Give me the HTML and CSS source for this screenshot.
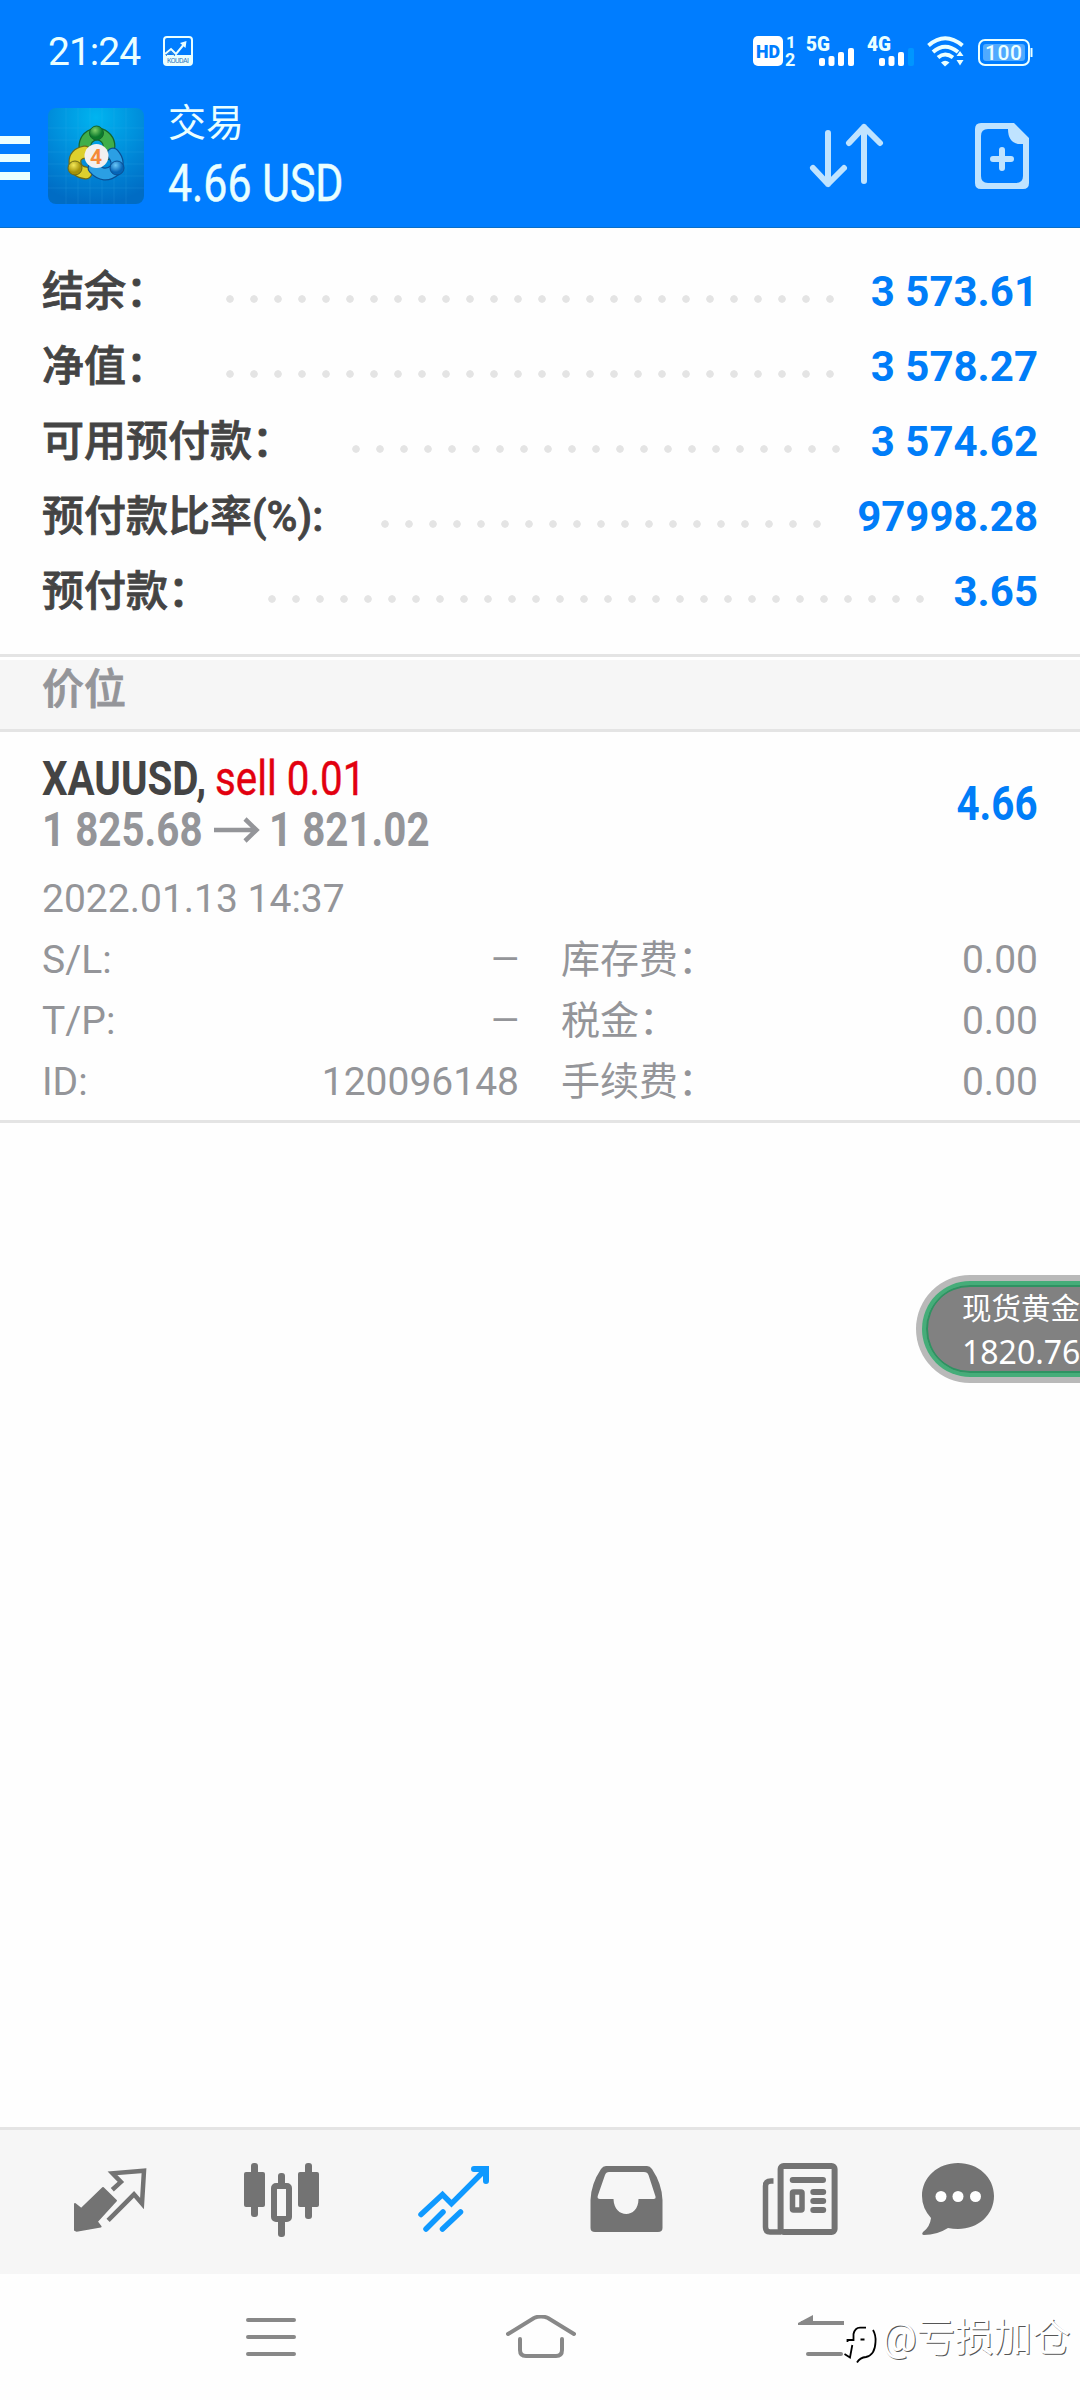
FILE: index.html
```html
<!DOCTYPE html>
<html lang="zh-CN">
<head>
    <meta charset="UTF-8">
    <meta name="viewport" content="width=device-width, initial-scale=1.0">
    <title>交易</title>
    <link rel="stylesheet" href="styles.css">
</head>
<body>
    <header class="header">
        <div class="status-bar">
            <span class="clock">21:24</span>
            <svg class="app-notice" width="30" height="30" viewBox="0 0 30 30">
                <rect x="1" y="1" width="28" height="28" rx="3" fill="none" stroke="#eaffff" stroke-width="2"/>
                <path d="M1 19H29V27Q29 29 27 29H3Q1 29 1 27Z" fill="#eaffff"/>
                <path d="M2 18L8 13L13 18L22 7" fill="none" stroke="#eaffff" stroke-width="2"/>
                <path d="M17 7L23.500 5L22.500 12Z" fill="#eaffff"/>
                <path d="M3 20L7 15.500L12 20" fill="none" stroke="#4a8fd0" stroke-width="1"/>
                <text x="4" y="27" font-size="7" textLength="22" fill="#2a76c0">KOUDAI</text>
            </svg>
            <svg class="signals" width="300" height="36" viewBox="0 0 300 36">
                <rect x="8" y="3" width="30" height="30" rx="5" fill="#fff"/>
                <text x="11" y="25" font-size="19" font-weight="900" textLength="24" lengthAdjust="spacingAndGlyphs" fill="#007dff">HD</text>
                <g fill="#eaffff" font-weight="700">
                    <text x="41" y="15" font-size="17">1</text>
                    <text x="40" y="33" font-size="18" textLength="11">2</text>
                    <text x="61" y="18" font-size="21" font-weight="900" textLength="24" lengthAdjust="spacingAndGlyphs">5G</text>
                    <text x="122" y="18" font-size="21" font-weight="900" textLength="24" lengthAdjust="spacingAndGlyphs">4G</text>
                </g>
                <g fill="#fff">
                    <rect x="74" y="25" width="6" height="8" rx="2"/>
                    <rect x="83.500" y="23" width="6" height="10" rx="2"/>
                    <rect x="93" y="19" width="6" height="14" rx="2"/>
                    <rect x="103" y="15" width="6" height="18" rx="2"/>
                    <rect x="134" y="25" width="6" height="8" rx="2"/>
                    <rect x="143.500" y="23" width="6" height="10" rx="2"/>
                    <rect x="153" y="19" width="6" height="14" rx="2"/>
                    <rect x="163" y="15" width="6" height="18" rx="2" fill="#0096ff"/>
                </g>
                <g fill="none" stroke="#eaffff" stroke-width="4">
                    <path d="M183.500 12.500Q200 -2 217.500 12.500"/>
                    <path d="M188 19Q200 8.500 213 19"/>
                    <path d="M193 24.500Q200 18.500 208 24.500"/>
                </g>
                <path d="M196 29.500Q200 26 204.500 29.500L200 33.500Z" fill="#eaffff"/>
                <path d="M211.500 23L215 18L218.500 23ZM211.500 27L215 32.500L218.500 27Z" fill="#eaffff"/>
                <rect x="234" y="7" width="50" height="25" rx="6" fill="none" stroke="#eaffff" stroke-width="2"/>
                <rect x="238" y="11" width="42" height="17" rx="3" fill="#4faaff"/>
                <rect x="285.500" y="15" width="2" height="9" fill="#eaffff"/>
                <text x="240" y="27" font-size="21" font-weight="500" textLength="37" fill="#eaffff">100</text>
            </svg>
        </div>
        <div class="toolbar">
            <div class="menu"><span></span><span></span><span></span></div>
            <svg class="logo" width="96" height="96" viewBox="0 0 96 96">
                <defs>
                    <radialGradient id="sky" cx="0.5" cy="0.1" r="0.9">
                        <stop offset="0" stop-color="#00b4f0"/>
                        <stop offset="0.6" stop-color="#0088d8"/>
                        <stop offset="1" stop-color="#006cc4"/>
                    </radialGradient>
                    <radialGradient id="green" cx="0.4" cy="0.3"><stop offset="0" stop-color="#7ed06a"/><stop offset="1" stop-color="#0b7a2c"/></radialGradient>
                    <radialGradient id="yellow" cx="0.4" cy="0.3"><stop offset="0" stop-color="#f4e95a"/><stop offset="1" stop-color="#a59208"/></radialGradient>
                    <radialGradient id="blue" cx="0.4" cy="0.3"><stop offset="0" stop-color="#6cc8f8"/><stop offset="1" stop-color="#0565b8"/></radialGradient>
                </defs>
                <rect width="96" height="96" rx="8" fill="url(#sky)"/>
                <path d="M18 0V96M30 0V96M42 0V96M54 0V96M66 0V96M78 0V96M0 20H96M0 32H96M0 44H96M0 56H96M0 68H96M0 80H96" stroke="#4cc4f0" stroke-opacity="0.15"/>
                <g fill="none" stroke-linecap="round">
                    <path d="M38 43A12 12 0 1 1 58 46" stroke="#14662c" stroke-width="13"/>
                    <path d="M38 43A12 12 0 1 1 58 46" stroke="#3fae4a" stroke-width="10.500"/>
                    <path d="M37 44Q26 46 27 55Q28 64 38 65" stroke="#6c6a18" stroke-width="13"/>
                    <path d="M37 44Q26 46 27 55Q28 64 38 65" stroke="#ddd02e" stroke-width="10.500"/>
                    <path d="M65 46Q72 54 67 62Q56 71 46 60" stroke="#0a4f94" stroke-width="13"/>
                    <path d="M65 46Q72 54 67 62Q56 71 46 60" stroke="#2b9fe4" stroke-width="10.500"/>
                </g>
                <circle cx="48.500" cy="25" r="7" fill="url(#green)" stroke="#14662c"/>
                <circle cx="27" cy="60" r="7" fill="url(#yellow)" stroke="#6c6a18"/>
                <circle cx="69" cy="60" r="7" fill="url(#blue)" stroke="#0a4f94"/>
                <circle cx="48.500" cy="48" r="12" fill="#f2f0f0"/>
                <text x="48" y="55.500" font-size="21" font-weight="700" text-anchor="middle" fill="#f58a38">4</text>
            </svg>
            <div class="title">
                <div class="title-name">交易</div>
                <div class="title-profit">4.66 USD</div>
            </div>
            <svg class="sort" width="76" height="66" viewBox="0 0 76 66" fill="none" stroke="#bfe3ff" stroke-width="6" stroke-linecap="round" stroke-linejoin="round">
                <path d="M20 10V61M5 45L20 61L36 45"/>
                <path d="M56 58V4M41 20L56 4L72 20"/>
            </svg>
            <svg class="new-order" width="54" height="66" viewBox="0 0 54 66">
                <path d="M6 0H39L54 15V60Q54 66 48 66H6Q0 66 0 60V6Q0 0 6 0ZM13 6Q6 6 6 13V53Q6 60 13 60H41Q48 60 48 53V21H43Q33 19 33 6Z" fill="#bfe3ff" fill-rule="evenodd"/>
                <path d="M27 27V45M18 36H36" stroke="#bfe3ff" stroke-width="6" stroke-linecap="round"/>
            </svg>
        </div>
    </header>

    <section class="account">
        <div class="account-row"><span>结余：</span><i class="dots"></i><b>3 573.61</b></div>
        <div class="account-row"><span>净值：</span><i class="dots"></i><b>3 578.27</b></div>
        <div class="account-row"><span>可用预付款：</span><i class="dots"></i><b>3 574.62</b></div>
        <div class="account-row"><span>预付款比率(%):</span><i class="dots"></i><b>97998.28</b></div>
        <div class="account-row"><span>预付款：</span><i class="dots"></i><b>3.65</b></div>
    </section>

    <div class="section-title">价位</div>

    <section class="position">
        <div class="position-main">
            <div>
                <div class="line"><span class="symbol">XAUUSD,</span><span class="side">sell 0.01</span></div>
                <div class="line">
                    <span class="price">1 825.68</span>
                    <svg class="arrow" width="46" height="26" viewBox="0 0 46 26" fill="none" stroke="#949599" stroke-width="4.500">
                        <path d="M0 13H43M31 2L42.500 13L31 24"/>
                    </svg>
                    <span class="price">1 821.02</span>
                </div>
            </div>
            <div class="profit">4.66</div>
        </div>
        <div class="open-time">2022.01.13 14:37</div>
        <div class="details">
            <span>S/L:</span><span class="num dash">—</span><span>库存费：</span><span class="num">0.00</span>
            <span>T/P:</span><span class="num dash">—</span><span>税金：</span><span class="num">0.00</span>
            <span>ID:</span><span class="num">120096148</span><span>手续费：</span><span class="num">0.00</span>
        </div>
    </section>

    <div class="quote-float">
        <div class="quote-inner">
            <div class="quote-name">现货黄金</div>
            <div class="quote-price">1820.76</div>
        </div>
    </div>

    <nav class="tabs">
        <svg width="90" height="90" viewBox="0 0 90 90">
            <path d="M10 47L16.300 52L38 31L51 43.700L31.800 64.700L35.600 69.500L11.500 73.700L10 73Z" fill="#737373" stroke="#737373" stroke-width="2" stroke-linejoin="round"/>
            <path d="M47.300 32.700L55.900 25L47.500 16.300L79 13.700L77 46.500L69 37.300L43.100 63.300" fill="none" stroke="#737373" stroke-width="4.500"/>
        </svg>
        <svg width="90" height="90" viewBox="0 0 90 90" fill="#737373">
            <rect x="7" y="15" width="21" height="35" rx="2"/>
            <rect x="14" y="6" width="7" height="54" rx="3"/>
            <rect x="41" y="16" width="7" height="14" rx="3"/>
            <rect x="41" y="60" width="7" height="20" rx="3"/>
            <rect x="37" y="29" width="15" height="33" rx="2" fill="none" stroke="#737373" stroke-width="6"/>
            <rect x="61" y="15" width="21" height="35" rx="2"/>
            <rect x="68" y="6" width="7" height="56" rx="3"/>
        </svg>
        <svg width="90" height="90" viewBox="0 0 90 90" fill="none" stroke="#0f99ff" stroke-width="5.500" stroke-linecap="round">
            <path d="M12 57.500L33.500 37.500L42.500 46.700L76 13"/>
            <path d="M65 12H77V24" stroke-width="6"/>
            <path d="M17 72L34 55M33.500 72L51.500 55"/>
        </svg>
        <svg width="90" height="90" viewBox="0 0 90 90">
            <path d="M25 9H66Q69 9 71 12Q81 27 81.500 43V71Q81.500 75 77 75H14Q9.500 75 9.500 71V43Q10 27 20 12Q22 9 25 9ZM28 15Q25 15 24 18L16.700 39Q16 42 19 42H32.500C33 62 57.500 62 57.500 42H72.500Q75 42 74.500 39.500L67.500 18Q66.500 15 63 15Z" fill="#737373" fill-rule="evenodd"/>
        </svg>
        <svg width="90" height="90" viewBox="0 0 90 90" fill="none" stroke="#737373" stroke-width="6">
            <rect x="27.600" y="9" width="54" height="66" rx="3"/>
            <path d="M20.500 24H18Q12.500 24 12.500 29V70Q12.500 75 17 75H28" stroke-width="5.500"/>
            <path d="M39.700 23H70M60.300 35H70.200M60.300 44H70.200M60.300 53H70.200" stroke-linecap="round"/>
            <rect x="39.500" y="35" width="9.500" height="18" rx="1" stroke-width="5.500"/>
        </svg>
        <svg class="chat" width="90" height="90" viewBox="0 0 90 90">
            <path d="M18 61Q9 51 9 39C9 20 25 6 45 6S81 20 81 39S65 72 45 72Q40 72 35 71Q24 78 11 78Q8 77.500 10 75Q17 70 18 61Z" fill="#737373"/>
            <circle cx="28" cy="39.500" r="5.500" fill="#fff"/>
            <circle cx="45" cy="39.500" r="5.500" fill="#fff"/>
            <circle cx="62.500" cy="39.500" r="5.500" fill="#fff"/>
        </svg>
    </nav>

    <footer class="system-nav">
        <svg width="50" height="44" viewBox="0 0 50 44" stroke="#888" stroke-width="4" stroke-linecap="round">
            <path d="M2 5H48M2 22H48M2 39H48"/>
        </svg>
        <svg class="home" width="70" height="44" viewBox="0 0 70 44" fill="none" stroke="#888" stroke-width="4" stroke-linecap="round">
            <path d="M2 19L28 3Q35 0 42 3L68 19"/>
            <path d="M14 24V35Q14 41 20 41H50Q56 41 56 35V24"/>
        </svg>
        <svg class="back" width="50" height="44" viewBox="0 0 50 44" fill="none" stroke="#888" stroke-width="4">
            <path d="M0 8L15 0V10H0Z" fill="#888" stroke="none"/>
            <path d="M3 8H46"/>
            <path d="M10 39H43" stroke-linecap="round"/>
        </svg>
        <div class="watermark">
            <svg width="36" height="44" viewBox="0 0 36 44" fill="none" stroke="#000" stroke-width="1.800">
                <path d="M0 32L8 18H3V10L14 3H26L32 14L30 30L12 41L5 36Z" fill="#fff" stroke="none"/>
                <path d="M3.500 21V19H9.500V13Q11 6.700 16 6.700H22"/>
                <path d="M29 9Q32 14 31.500 21Q31 34 22 36Q16 36.500 13 41.500"/>
                <path d="M16.500 18.500H20.500M8.300 24L6 36.500L0.500 33"/>
            </svg>
            <span>@亏损加仓</span>
        </div>
    </footer>
</body>
</html>
```
FILE: styles.css
```css
* {
    box-sizing: border-box;
    margin: 0;
    padding: 0;
}

body {
    position: relative;
    display: flex;
    flex-direction: column;
    width: 1080px;
    height: 2400px;
    overflow: hidden;
    background-color: #fefefe;
    font-family: Roboto, "Noto Sans CJK SC", sans-serif;
}

svg {
    display: block;
    flex: none;
}

/* header */
.header {
    height: 228px;
    background-color: #007dff;
    border-bottom: 1px solid #0a6fc8;
    color: #eaffff;
}

.status-bar {
    display: flex;
    align-items: flex-start;
    height: 99px;
    padding: 33px 0 0 48px;
}

.clock {
    width: 115px;
    font-size: 39px;
    line-height: 38px;
    letter-spacing: -1px;
}

.app-notice {
    margin-top: 3px;
}

.signals {
    width: 300px;
    margin-left: 552px;
}

.toolbar {
    display: flex;
    align-items: flex-start;
    padding-top: 9px;
}

.menu {
    display: flex;
    flex-direction: column;
    gap: 10px;
    width: 30px;
    margin-top: 28px;
}

.menu span {
    height: 8px;
    background-color: #eaffff;
}

.logo {
    margin-left: 18px;
}

.title {
    width: 641px;
    margin-left: 24px;
    white-space: nowrap;
}

.title-name {
    margin-top: -7px;
    font-size: 38px;
    line-height: 44px;
}

.title-profit {
    width: 240px;
    margin-top: 9px;
    font-size: 51px;
    line-height: 60px;
    -webkit-text-stroke: 0.5px;
    transform: scaleX(0.84);
    transform-origin: left;
}

.sort {
    margin: 15px 0 0 -1px;
}

.new-order {
    margin: 15px 0 0 91px;
}

/* account summary */
.account {
    height: 426px;
    padding: 26px 42px 0;
}

.account-row {
    display: flex;
    align-items: center;
    height: 75px;
    font-size: 42px;
    line-height: 75px;
    font-weight: 500;
    color: #444;
    white-space: nowrap;
}

.account-row span {
    -webkit-text-stroke: 0.8px;
}

.account-row b {
    font-weight: 700;
    color: #007df8;
}

.dots {
    flex: 1;
    height: 8px;
    margin: 15px 23px 0 50px;
    background: radial-gradient(circle at center, #e4e4e4 3.4px, transparent 4.1px) repeat-x 0 0 / 24px 8px;
}

.section-title {
    height: 78px;
    padding: 5px 42px 0;
    border-top: 3px solid #e4e4e4;
    border-bottom: 3px solid #e4e4e4;
    background: linear-gradient(#fff 3px, #f6f6f6 3px);
    font-size: 42px;
    line-height: 56px;
    font-weight: 500;
    -webkit-text-stroke: 0.8px;
    color: #949599;
}

/* open position */
.position {
    height: 391px;
    padding: 21px 42px 0;
    border-bottom: 3px solid #e4e4e4;
    font-size: 39px;
    color: #949599;
}

.position-main {
    display: flex;
    justify-content: space-between;
}

.line {
    display: flex;
    height: 51px;
    font-size: 48px;
    line-height: 51px;
    white-space: nowrap;
}

.symbol,
.side,
.price {
    transform: scaleX(0.84);
    transform-origin: left;
}

.symbol {
    width: 173px;
    font-weight: 700;
    color: #444;
}

.side {
    color: #e2000f;
    -webkit-text-stroke: 0.4px;
}

.price {
    width: 172px;
    font-weight: 700;
}

.arrow {
    margin: 13px 9px 0 0;
}

.profit {
    margin-top: 25px;
    font-size: 48px;
    line-height: 51px;
    font-weight: 700;
    color: #007df8;
    transform: scaleX(0.84);
    transform-origin: right;
}

.open-time {
    margin-top: 14px;
    line-height: 61px;
}

.details {
    display: grid;
    grid-template-columns: 120px 357px 200px 1fr;
    grid-auto-rows: 61px;
    line-height: 61px;
}

.details span:nth-child(4n+3) {
    margin-left: 42px;
    white-space: nowrap;
}

.num {
    text-align: right;
}

.dash {
    font-size: 36px;
}

/* floating quote */
.quote-float {
    position: absolute;
    top: 1275px;
    right: 0;
    width: 164px;
    height: 108px;
    padding: 6px 0 6px 6px;
    border-radius: 54px 0 0 54px;
    background-color: #b9b9b9;
}

.quote-inner {
    height: 96px;
    padding-left: 36px;
    border: 4px solid #45ad79;
    border-right: none;
    border-radius: 48px 0 0 48px;
    background-color: #818181;
    box-shadow: inset 2px 0 0 #2e9362, inset 0 2px 0 #2e9362, inset 0 -2px 0 #2e9362;
    color: #fff;
    white-space: nowrap;
    overflow: hidden;
}

.quote-name {
    margin-top: 4px;
    font-size: 29.5px;
    line-height: 40px;
}

.quote-price {
    font-family: "Noto Sans", sans-serif;
    font-size: 32px;
    line-height: 45px;
}

/* bottom bars */
.tabs {
    display: flex;
    gap: 82px;
    height: 147px;
    margin-top: auto;
    padding: 27px 0 0 65px;
    border-top: 3px solid #e4e4e4;
    background-color: #f6f6f6;
}

.chat {
    margin-left: -12px;
}

.system-nav {
    position: relative;
    display: flex;
    height: 126px;
    padding: 41px 0 0 246px;
}

.home {
    margin-left: 210px;
}

.back {
    margin-left: 222px;
}

.watermark {
    position: absolute;
    top: 42px;
    left: 844px;
    display: flex;
    font-size: 38.5px;
    line-height: 44px;
    color: #fff;
    text-shadow: 1px 1px 0 #555;
    white-space: nowrap;
}

.watermark svg {
    margin: 5px 2px 0 0;
}
```
